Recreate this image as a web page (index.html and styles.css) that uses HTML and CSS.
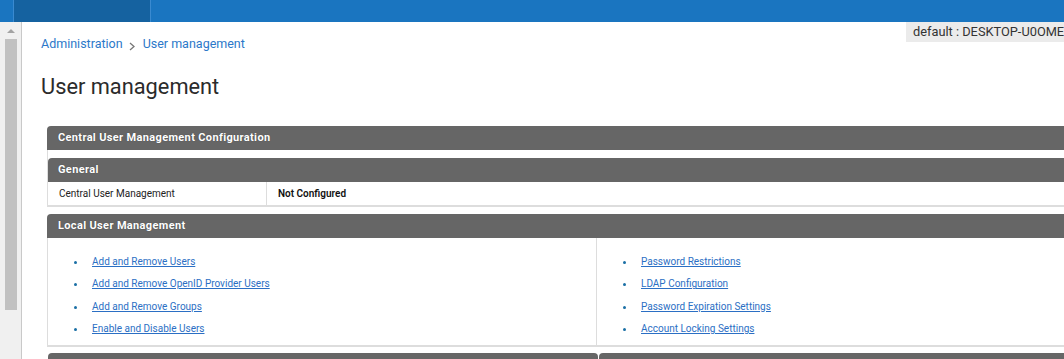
FILE: index.html
```html
<!DOCTYPE html>
<html lang="en">
<head>
    <meta charset="UTF-8">
    <title>User management</title>
    <link rel="stylesheet" href="styles.css">
</head>
<body>
    <div class="topbar">
        <div class="brand"></div>
    </div>
    <div class="layout">
        <div class="sidebar">
            <div class="scroll-up"></div>
            <div class="scroll-thumb"></div>
        </div>
        <div class="main">
            <div class="host-tag">default : DESKTOP-U0OMEIQ</div>
            <div class="breadcrumb">
                <a href="#">Administration</a>
                <svg class="crumb-sep" width="6" height="9" viewBox="0 0 6 9">
                    <path d="M1 1 L5 4.5 L1 8" fill="none" stroke="#777" stroke-width="1.3"/>
                </svg>
                <a href="#">User management</a>
            </div>
            <h1>User management</h1>

            <div class="panel first">
                <div class="panel-head">Central User Management Configuration</div>
                <div class="panel-body nested">
                    <div class="panel-head inner">General</div>
                    <div class="info-row">
                        <div class="info-label">Central User Management</div>
                        <div class="info-value">Not Configured</div>
                    </div>
                </div>
            </div>

            <div class="panel">
                <div class="panel-head">Local User Management</div>
                <div class="panel-body columns">
                    <ul class="link-list">
                        <li><a href="#">Add and Remove Users</a></li>
                        <li><a href="#">Add and Remove OpenID Provider Users</a></li>
                        <li><a href="#">Add and Remove Groups</a></li>
                        <li><a href="#">Enable and Disable Users</a></li>
                    </ul>
                    <ul class="link-list">
                        <li><a href="#">Password Restrictions</a></li>
                        <li><a href="#">LDAP Configuration</a></li>
                        <li><a href="#">Password Expiration Settings</a></li>
                        <li><a href="#">Account Locking Settings</a></li>
                    </ul>
                </div>
            </div>

            <div class="panel-pair">
                <div class="panel half">
                    <div class="panel-head">&nbsp;</div>
                </div>
                <div class="panel half">
                    <div class="panel-head">&nbsp;</div>
                </div>
            </div>
        </div>
    </div>
</body>
</html>
```

FILE: styles.css
```css
body {
    margin: 0;
    font-family: Roboto, "Liberation Sans", sans-serif;
    color: #333;
    background: #fff;
    overflow: hidden;
    height: 359px;
}

.topbar {
    height: 22px;
    background-color: #1a75c0;
    display: flex;
}

.brand {
    width: 136px;
    margin-left: 13px;
    background-color: #1562a0;
    border-left: 1px solid #3a8ad0;
    border-right: 1px solid #3a8ad0;
}

.layout {
    display: flex;
    height: 337px;
}

.sidebar {
    width: 21px;
    flex-shrink: 0;
    background-color: #f0f0f0;
    border-right: 1px solid #c9c9c9;
    display: flex;
    flex-direction: column;
    align-items: center;
}

.scroll-up {
    width: 0;
    height: 0;
    margin-top: 7px;
    border-left: 4px solid transparent;
    border-right: 4px solid transparent;
    border-bottom: 4px solid #a3a3a3;
}

.scroll-thumb {
    width: 12px;
    height: 271px;
    margin-top: 6px;
    margin-left: 1px;
    background-color: #c1c1c1;
}

.main {
    position: relative;
    flex: 1;
    min-width: 0;
    padding: 13px 0 0 19px;
    overflow: hidden;
}

.host-tag {
    position: absolute;
    top: 0;
    left: 884px;
    width: 200px;
    height: 20px;
    padding-left: 7px;
    line-height: 20px;
    font-size: 12.8px;
    color: #333;
    background-color: #ebebeb;
    white-space: nowrap;
}

.breadcrumb {
    font-size: 12.5px;
    line-height: 17px;
    display: flex;
    align-items: center;
}

.breadcrumb a {
    color: #2b78c9;
    text-decoration: none;
}

.crumb-sep {
    margin: 5px 8px 0 6px;
}

h1 {
    margin: 21px 0 25px;
    font-size: 21.8px;
    line-height: 28px;
    font-weight: 400;
    color: #2b2b2b;
}

.panel {
    width: 1100px;
    margin-left: 6px;
    margin-bottom: 6px;
}

.panel.first {
    margin-bottom: 7px;
}

.panel-head {
    height: 24px;
    line-height: 24px;
    padding-left: 11px;
    background-color: #666;
    border-radius: 4px 4px 0 0;
    color: #fff;
    font-size: 11px;
    font-weight: 700;
    letter-spacing: 0.35px;
    text-shadow: 0 0 1px rgba(0, 0, 0, 0.4);
}

.panel-body {
    border: 1px solid #ddd;
    border-top: none;
}

.panel-body.nested {
    padding-top: 8px;
    border-bottom: none;
}

.panel-head.inner {
    padding-left: 10px;
}

.info-row {
    display: flex;
    height: 23px;
    line-height: 23px;
    font-size: 10px;
    border-bottom: 2px solid #ddd;
    color: #222;
}

.info-label {
    width: 207px;
    padding-left: 11px;
    border-right: 1px solid #ddd;
}

.info-value {
    padding-left: 11px;
    font-weight: 600;
    color: #111;
}

.panel-body.columns {
    display: grid;
    grid-template-columns: 1fr 1fr;
    border-bottom: 2px solid #ddd;
}

.link-list {
    list-style: none;
    margin: 0;
    padding: 13px 0 5px 0;
}

.link-list:first-child {
    border-right: 1px solid #ddd;
}

.link-list li {
    position: relative;
    line-height: 22.3px;
    font-size: 10px;
    padding-left: 44px;
}

.link-list li::before {
    content: "";
    position: absolute;
    left: 26px;
    top: 10px;
    width: 3px;
    height: 3px;
    border-radius: 1.5px;
    background-color: #1a6fa5;
}

.link-list a {
    color: #2b6fc4;
    text-decoration: underline;
}

.panel-pair {
    display: flex;
    width: 1100px;
    margin-left: 7px;
}

.panel.half {
    width: 50%;
    margin: 0;
}

.panel.half + .panel.half {
    margin-left: 1px;
}
```
